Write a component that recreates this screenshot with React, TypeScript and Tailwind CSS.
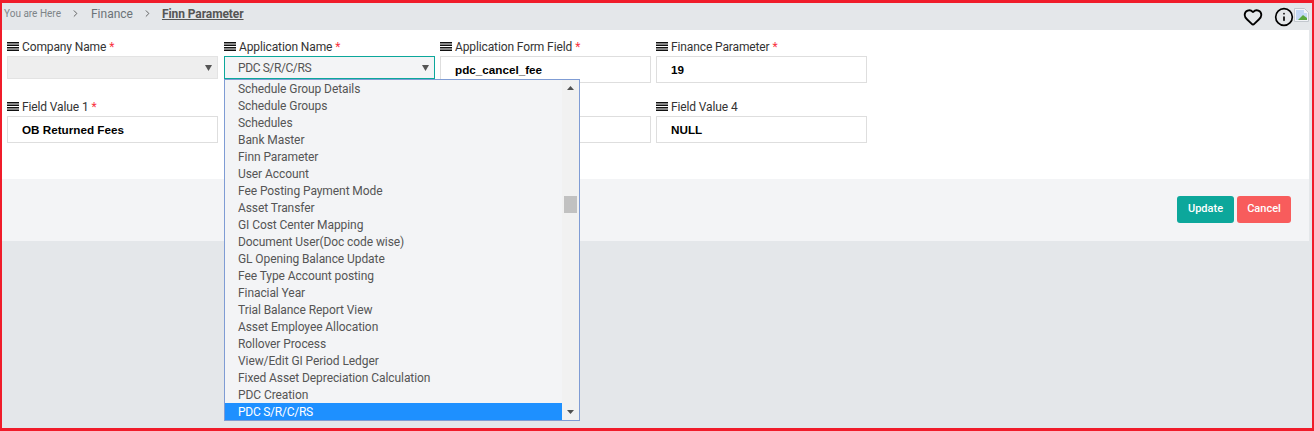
import React from 'react';
import { ChevronRight, Heart, Info } from 'lucide-react';

const options = [
  'Schedule Group Details',
  'Schedule Groups',
  'Schedules',
  'Bank Master',
  'Finn Parameter',
  'User Account',
  'Fee Posting Payment Mode',
  'Asset Transfer',
  'GI Cost Center Mapping',
  'Document User(Doc code wise)',
  'GL Opening Balance Update',
  'Fee Type Account posting',
  'Finacial Year',
  'Trial Balance Report View',
  'Asset Employee Allocation',
  'Rollover Process',
  'View/Edit GI Period Ledger',
  'Fixed Asset Depreciation Calculation',
  'PDC Creation',
  'PDC S/R/C/RS',
];

const LinesIcon = () => (
  <svg width="12" height="9" viewBox="0 0 12 9" className="mr-[3px] shrink-0" fill="#111">
    <rect y="0" width="12" height="1.5" />
    <rect y="2.5" width="12" height="1.5" />
    <rect y="5" width="12" height="1.5" />
    <rect y="7.5" width="12" height="1.5" />
  </svg>
);

const Label = ({ text, required }: { text?: string; required?: boolean }) => (
  <div className="flex items-center h-[19px] text-[12px] tracking-[-0.12px] text-[#333] leading-none">
    {text && <LinesIcon />}
    <span>{text}</span>
    {required && <span className="text-[#f8323f] ml-[3px]">*</span>}
  </div>
);

const TextField = ({ label, value, required }: { label?: string; value: string; required?: boolean }) => (
  <div className="w-[211px]">
    <Label text={label} required={required} />
    <div className="h-[27px] border border-[#dedede] bg-white flex items-center pl-[14px] text-[11.7px] font-bold text-black font-['Liberation_Sans',sans-serif]">
      {value}
    </div>
  </div>
);

const Caret = () => (
  <svg width="7" height="6" viewBox="0 0 7 6" className="text-[#555] mr-[1px]">
    <path d="M0 0h7L3.5 6z" fill="currentColor" />
  </svg>
);

const BrokenImage = () => (
  <svg width="15" height="14" viewBox="0 0 15 14" className="shrink-0 mb-[4px]">
    <path d="M0.5 0.5h10l4 4v9h-14z" fill="#f2f4f8" stroke="#c3c8ce" />
    <path d="M2 2h8v3h3v7H2z" fill="#c4d8f4" />
    <path d="M4 12l5-5 4 3v2z" fill="#5aa83c" />
  </svg>
);

export default function App() {
  return (
    <div className="w-[1314px] h-[431px] overflow-hidden border-[2px] border-t-[3px] border-b-[3px] border-[#f01c2a] bg-[#e4e7ea] font-['Roboto',sans-serif]">
      <div className="h-[27px] flex items-center pl-[2px] pr-[3px] text-[#6b7378]">
        <div className="flex items-center pb-[6px]">
          <span className="text-[10px] text-[#7d8488]">You are Here</span>
          <ChevronRight size={11} className="ml-[9px] text-[#555]" />
          <span className="ml-[10px] text-[12px]">Finance</span>
          <ChevronRight size={11} className="ml-[9px] text-[#555]" />
          <span className="ml-[9px] text-[12px] tracking-[-0.08px] font-bold text-[#555] underline">Finn Parameter</span>
        </div>
        <div className="ml-auto flex items-center">
          <Heart size={20} strokeWidth={2.2} className="text-black mr-[11px]" />
          <Info size={20} strokeWidth={2} className="text-black" />
          <BrokenImage />
        </div>
      </div>

      <div className="relative mr-[3px] bg-white h-[149px] pl-[5px] pt-[7px]">
        <div className="grid grid-cols-[212px_211px_211px_211px] gap-x-[5px] gap-y-[14px] w-[860px]">
          <div className="w-[211px]">
            <Label text="Company Name" required />
            <div className="h-[23px] bg-[#eeeeee] border border-[#e3e3e3] flex items-center justify-end pr-[4px]">
              <Caret />
            </div>
          </div>
          <div>
            <Label text="Application Name" required />
            <div className="h-[23px] bg-[#f3f4f6] border border-[#0ca79b] flex items-center justify-between pl-[13px] pr-[4px] text-[12px] tracking-[-0.4px] text-[#555]">
              PDC S/R/C/RS
              <Caret />
            </div>
          </div>
          <TextField label="Application Form Field" value="pdc_cancel_fee" required />
          <TextField label="Finance Parameter" value="19" required />
          <TextField label="Field Value 1" value="OB Returned Fees" required />
          <TextField value="" />
          <TextField value="" />
          <TextField label="Field Value 4" value="NULL" />
        </div>

        <div className="absolute left-[222px] top-[49px] z-10 w-[356px] h-[342px] border border-[#7f9cd4] bg-[#f3f4f6] flex">
          <div className="flex-1">
            {options.map(option => (
              <div
                key={option}
                className={`h-[17px] pl-[13px] flex items-center text-[12px] ${option === 'PDC S/R/C/RS' ? 'bg-[#1e90ff] text-white tracking-[-0.25px]' : 'text-[#555] tracking-[-0.08px]'}`}
              >
                {option}
              </div>
            ))}
          </div>
          <div className="relative w-[17px] bg-[#f1f1f1] flex flex-col items-center justify-between py-[6px]">
            <svg width="7" height="4" viewBox="0 0 7 4"><path d="M3.5 0L7 4H0z" fill="#505050" /></svg>
            <div className="absolute left-[2px] top-[116px] w-[13px] h-[17px] bg-[#c1c1c1]" />
            <svg width="7" height="4" viewBox="0 0 7 4"><path d="M0 0h7L3.5 4z" fill="#505050" /></svg>
          </div>
        </div>
      </div>

      <div className="mr-[3px] h-[62px] bg-[#f3f4f6] flex items-start justify-end gap-[3px] pt-[17px] pr-[18px]">
        <button className="w-[57px] h-[27px] rounded-[3px] bg-[#0ca79b] text-white text-[11px] font-medium">Update</button>
        <button className="w-[54px] h-[27px] rounded-[3px] bg-[#f85c5c] text-white text-[11px] font-medium">Cancel</button>
      </div>
    </div>
  );
}
